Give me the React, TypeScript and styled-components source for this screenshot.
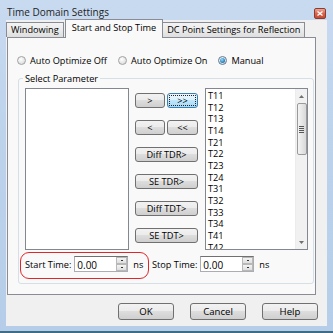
import React from "react";
import styled, { createGlobalStyle, css } from "styled-components";

const Global = createGlobalStyle`
  html, body { margin: 0; padding: 0; background: #ffffff; }
  body {
    font-family: "Open Sans", "Liberation Sans", Arial, sans-serif;
    font-size: 9.2px;
    color: #000;
  }
  * { box-sizing: border-box; }
`;

const Window = styled.div`
  width: 333px;
  height: 333px;
  display: flex;
  flex-direction: column;
  background: linear-gradient(180deg, #c8daf0 0%, #bdd3ec 40%, #b6cde9 100%);
  border-bottom: 2px solid #3f6d86;
  padding: 0 6px 5px 6px;
`;

const TitleBar = styled.div`
  height: 20px;
  display: flex;
  align-items: flex-start;
  justify-content: space-between;
  padding: 5px 1px 0 1px;
  font-size: 10px;
  color: #1e1e1e;
`;

const CloseButton = styled.div`
  width: 12px;
  height: 11px;
  margin-top: 3px;
  border: 1px solid #8d3b2e;
  border-radius: 2px;
  background: linear-gradient(180deg, #eaa898 0%, #d8664e 50%, #c44a31 100%);
  display: flex;
  align-items: center;
  justify-content: center;
`;

const Client = styled.div`
  flex: 1;
  background: #f0f0f0;
  display: flex;
  flex-direction: column;
`;

const TabStrip = styled.div`
  display: flex;
  align-items: flex-end;
  height: 17px;
  padding-left: 3px;
  margin-left: -2px;
`;

const Tab = styled.div<{ $active?: boolean }>`
  height: 15px;
  padding: 0 4px 1px 4px;
  display: flex;
  align-items: center;
  border: 1px solid #898c95;
  border-bottom: none;
  background: linear-gradient(180deg, #f3f3f3 0%, #ebebeb 50%, #dedede 100%);
  margin-left: -1px;
  white-space: nowrap;
  ${(p) =>
    p.$active &&
    css`
      background: #f9f9f9;
      padding: 0 6px 3px 6px;
      margin-left: 1px;
      position: relative;
      z-index: 1;
      margin-bottom: -1px;
      height: 19px;
    `}
`;

const Panel = styled.div`
  width: 309px;
  height: 258px;
  margin-left: 1px;
  border: 1px solid #898c95;
  background: #f9f9f9;
  display: flex;
  flex-direction: column;
  padding: 16px 0 0 9px;
`;

const RadioRow = styled.div`
  display: flex;
  align-items: center;
  height: 12px;
`;

const RadioItem = styled.label`
  display: flex;
  align-items: center;
  gap: 4px;
  margin-right: 11px;
  white-space: nowrap;
`;

const RadioCircle = styled.span<{ $checked?: boolean }>`
  width: 9px;
  height: 9px;
  border-radius: 50%;
  border: 1px solid #a2a2a2;
  background: radial-gradient(circle at 40% 35%, #ffffff 0%, #e4e4e4 60%, #d0d0d0 100%);
  display: inline-flex;
  align-items: center;
  justify-content: center;
  ${(p) =>
    p.$checked &&
    css`
      border-color: #5b7c96;
      &::after {
        content: "";
        width: 5px;
        height: 5px;
        border-radius: 50%;
        background: radial-gradient(circle at 40% 35%, #9bd8f5 0%, #2a86c0 60%, #1a5a8c 100%);
      }
    `}
`;

const GroupBox = styled.div`
  position: relative;
  margin-top: 12px;
  margin-left: 1px;
  width: 296px;
  height: 206px;
  border: 1px solid #d5dfe5;
  border-radius: 3px;
  padding: 9px 0 0 6px;
  display: flex;
  flex-direction: column;
`;

const Legend = styled.span`
  position: absolute;
  top: -7px;
  left: 4px;
  padding: 0 2px;
  background: #f9f9f9;
  line-height: 13px;
`;

const ListsRow = styled.div`
  display: flex;
  align-items: flex-start;
`;

const ListBox = styled.div<{ $w: number }>`
  width: ${(p) => p.$w}px;
  height: 162px;
  border: 1px solid #828790;
  background: #ffffff;
  display: flex;
  overflow: hidden;
`;

const Items = styled.div`
  flex: 1;
  padding: 1px 0 0 2px;
  display: flex;
  flex-direction: column;
`;

const Item = styled.div`
  height: 11.67px;
  line-height: 11.67px;
  white-space: nowrap;
`;

const ScrollBar = styled.div`
  width: 12px;
  display: flex;
  flex-direction: column;
  align-items: center;
  background: #f1f1f1;
  border-left: 1px solid #ececec;
`;

const ScrollArrow = styled.div`
  height: 14px;
  width: 12px;
  display: flex;
  align-items: center;
  justify-content: center;
`;

const Thumb = styled.div`
  width: 10px;
  height: 52px;
  border: 1px solid #9a9a9a;
  border-radius: 2px;
  background: linear-gradient(90deg, #f4f4f4 0%, #e6e6e6 50%, #d8d8d8 100%);
  display: flex;
  flex-direction: column;
  align-items: center;
  justify-content: center;
  gap: 1px;
`;

const Grip = styled.span`
  width: 5px;
  height: 1px;
  background: #555;
`;

const ScrollTrack = styled.div`
  flex: 1;
`;

const ButtonCol = styled.div`
  width: 63px;
  margin: 5px 7px 0 6px;
  display: flex;
  flex-direction: column;
  gap: 12px;
`;

const ButtonPair = styled.div`
  display: flex;
  gap: 2px;
`;

const Btn = styled.button<{ $w?: number; $focused?: boolean }>`
  width: ${(p) => (p.$w ? `${p.$w}px` : "100%")};
  height: 15px;
  padding: 0;
  border: 1px solid #707070;
  border-radius: 3px;
  font-family: inherit;
  font-size: 9.2px;
  color: #000;
  background: linear-gradient(180deg, #f2f2f2 0%, #ebebeb 49%, #dddddd 50%, #cfcfcf 100%);
  display: flex;
  align-items: center;
  justify-content: center;
  white-space: nowrap;
  ${(p) =>
    p.$focused &&
    css`
      border-color: #3c7fb1;
      background: linear-gradient(180deg, #eaf6fd 0%, #d9f0fc 49%, #bee6fd 50%, #a7d9f5 100%);
      outline: 1px dotted #222;
      outline-offset: -3px;
    `}
`;

const BottomRow = styled.div`
  display: flex;
  align-items: flex-start;
  margin-top: 2px;
  margin-left: -5px;
`;

const Highlight = styled.div`
  display: flex;
  align-items: flex-start;
  border: 1px solid #e0262a;
  border-radius: 9px;
  padding: 3px 4px 0 4px;
  width: 129px;
  height: 27px;
`;

const Field = styled.div`
  display: flex;
  align-items: center;
  height: 16px;
`;

const FieldLabel = styled.span`
  white-space: nowrap;
  margin-right: 3px;
`;

const SpinBox = styled.div`
  width: 54px;
  height: 16px;
  border: 1px solid #abadb3;
  border-top-color: #707070;
  background: #fff;
  display: flex;
  margin-right: 5px;
`;

const SpinText = styled.div`
  flex: 1;
  padding: 2px 0 0 2px;
  font-size: 10px;
  line-height: 13px;
`;

const SpinButtons = styled.div`
  width: 11px;
  display: flex;
  flex-direction: column;
`;

const SpinHalf = styled.div`
  flex: 1;
  background: linear-gradient(180deg, #f4f4f4, #dedede);
  border: 1px solid #b8b8b8;
  display: flex;
  align-items: center;
  justify-content: center;
`;

const Dot = styled.span`
  width: 2px;
  height: 1px;
  background: #333;
`;

const Unit = styled.span`
  white-space: nowrap;
`;

const StopField = styled(Field)`
  margin-top: 4px;
  margin-left: 3px;
`;

const Footer = styled.div`
  display: flex;
  justify-content: flex-end;
  gap: 16px;
  padding: 8px 9px 0 0;
`;

const FooterBtn = styled(Btn)`
  width: 56px;
  height: 17px;
  font-size: 9.6px;
`;

const ArrowUp = () => (
  <svg width="5" height="3" viewBox="0 0 5 3">
    <path d="M0 3 L2.5 0 L5 3 Z" fill="#707070" />
  </svg>
);
const ArrowDown = () => (
  <svg width="5" height="3" viewBox="0 0 5 3">
    <path d="M0 0 L2.5 3 L5 0 Z" fill="#707070" />
  </svg>
);

const Spin: React.FC<{ value: string }> = ({ value }) => (
  <SpinBox>
    <SpinText>{value}</SpinText>
    <SpinButtons>
      <SpinHalf>
        <Dot />
      </SpinHalf>
      <SpinHalf>
        <Dot />
      </SpinHalf>
    </SpinButtons>
  </SpinBox>
);

const params = ["T11", "T12", "T13", "T14", "T21", "T22", "T23", "T24", "T31", "T32", "T33", "T34", "T41", "T42"];

export default function App() {
  return (
    <>
      <Global />
      <Window>
        <TitleBar>
          <span>Time Domain Settings</span>
          <CloseButton>
            <svg width="6" height="5" viewBox="0 0 6 5">
              <path d="M0.5 0.5 L5.5 4.5 M5.5 0.5 L0.5 4.5" stroke="#ffffff" strokeWidth="1.3" />
            </svg>
          </CloseButton>
        </TitleBar>
        <Client>
          <TabStrip>
            <Tab>Windowing</Tab>
            <Tab $active>Start and Stop Time</Tab>
            <Tab>DC Point Settings for Reflection</Tab>
          </TabStrip>
          <Panel>
            <RadioRow>
              <RadioItem>
                <RadioCircle />
                Auto Optimize Off
              </RadioItem>
              <RadioItem>
                <RadioCircle />
                Auto Optimize On
              </RadioItem>
              <RadioItem>
                <RadioCircle $checked />
                Manual
              </RadioItem>
            </RadioRow>
            <GroupBox>
              <Legend>Select Parameter</Legend>
              <ListsRow>
                <ListBox $w={104} />
                <ButtonCol>
                  <ButtonPair>
                    <Btn $w={30}>&gt;</Btn>
                    <Btn $w={31} $focused>&gt;&gt;</Btn>
                  </ButtonPair>
                  <ButtonPair>
                    <Btn $w={30}>&lt;</Btn>
                    <Btn $w={31}>&lt;&lt;</Btn>
                  </ButtonPair>
                  <Btn>Diff TDR&gt;</Btn>
                  <Btn>SE TDR&gt;</Btn>
                  <Btn>Diff TDT&gt;</Btn>
                  <Btn>SE TDT&gt;</Btn>
                </ButtonCol>
                <ListBox $w={103}>
                  <Items>
                    {params.map((p) => (
                      <Item key={p}>{p}</Item>
                    ))}
                  </Items>
                  <ScrollBar>
                    <ScrollArrow>
                      <ArrowUp />
                    </ScrollArrow>
                    <Thumb>
                      <Grip />
                      <Grip />
                      <Grip />
                      <Grip />
                    </Thumb>
                    <ScrollTrack />
                    <ScrollArrow>
                      <ArrowDown />
                    </ScrollArrow>
                  </ScrollBar>
                </ListBox>
              </ListsRow>
              <BottomRow>
                <Highlight>
                  <Field>
                    <FieldLabel>Start Time:</FieldLabel>
                    <Spin value="0.00" />
                    <Unit>ns</Unit>
                  </Field>
                </Highlight>
                <StopField>
                  <FieldLabel>Stop Time:</FieldLabel>
                  <Spin value="0.00" />
                  <Unit>ns</Unit>
                </StopField>
              </BottomRow>
            </GroupBox>
          </Panel>
          <Footer>
            <FooterBtn>OK</FooterBtn>
            <FooterBtn>Cancel</FooterBtn>
            <FooterBtn>Help</FooterBtn>
          </Footer>
        </Client>
      </Window>
    </>
  );
}
